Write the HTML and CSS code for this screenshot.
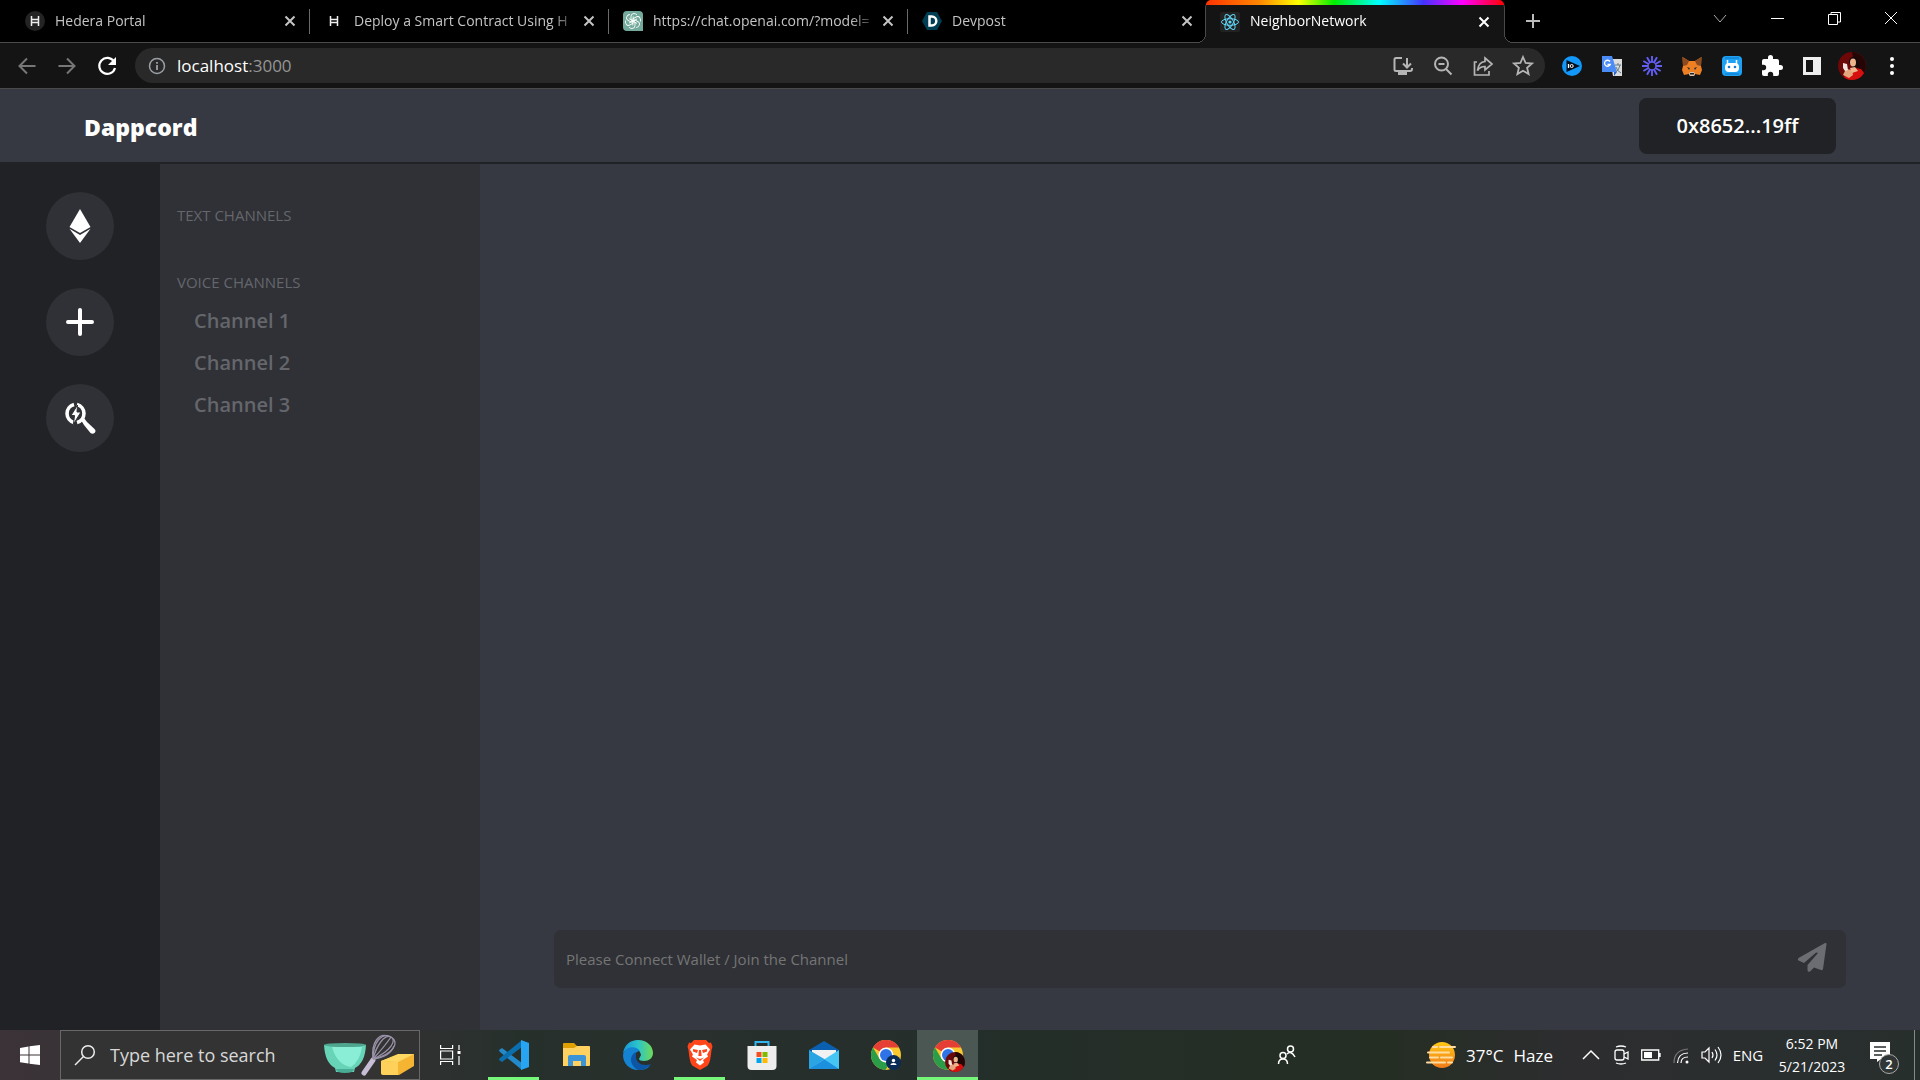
FILE: index.html
```html
<!DOCTYPE html>
<html lang="en">
<head>
  <meta charset="UTF-8" />
  <meta name="viewport" content="width=device-width, initial-scale=1.0" />
  <title>NeighborNetwork</title>
  <link rel="stylesheet" href="styles.css">
</head>
<body>
  <svg class="defs" aria-hidden="true">
    <defs>
      <symbol id="cross" viewBox="0 0 20 20"><path d="M5.5 5.5l9 9M14.500 5.500l-9 9" stroke="currentColor" stroke-width="2" fill="none"/></symbol>
      <symbol id="hedera" viewBox="0 0 20 20"><path d="M6.500 5v10M13.500 5v10M6.500 8.500h7M6.500 11.500h7" stroke="#eee" stroke-width="1.500" fill="none"/></symbol>
      <symbol id="avatar" viewBox="0 0 28 28">
        <circle cx="14" cy="14" r="14" fill="#6d0808"/>
        <path d="M14 0a14 14 0 0 1 12 21L17 14z" fill="#250606"/>
        <path d="M11 11c-1-6 7-9 9-3l1 6-5 3z" fill="#120909"/>
        <ellipse cx="15" cy="10.500" rx="3" ry="4" fill="#eeb58d"/>
        <path d="M6 25l5-7 5-2 7 1 3 4q-4 7-12 7-5 0-8-3z" fill="#d6100e"/>
        <path d="M5 23l3-6 6 1 1 5-4 3z" fill="#e5a67d"/>
        <path d="M5 11l4 1 1 6-3 1-2-3z" fill="#f4e5df"/>
        <path d="M12 16l5-1 3 4-6 2z" fill="#eeb58d"/>
      </symbol>
      <symbol id="chrome" viewBox="0 0 30 30">
        <circle cx="15" cy="15" r="15" fill="#f9c72e"/>
        <path d="M15 15L2 7.500A15 15 0 0 1 28 7.500H15z" fill="#e53e35"/>
        <path d="M2 7.500l6.500 11.300L15 22.500h4L14.500 30A15 15 0 0 1 2 7.500z" fill="#2b9c48"/>
        <circle cx="15" cy="15" r="7.500" fill="#fff"/>
        <circle cx="15" cy="15" r="6" fill="#2f73e8"/>
      </symbol>
    </defs>
  </svg>

  <!-- Browser tabs -->
  <div class="tab-strip">
    <div class="tab">
      <svg class="favicon" viewBox="0 0 20 20"><circle cx="10" cy="10" r="10" fill="#232323"/><use href="#hedera"/></svg>
      <a class="tab-title" href="#">Hedera Portal</a>
      <button class="tab-close" aria-label="Close tab"><svg><use href="#cross"/></svg></button>
    </div>
    <div class="tab">
      <svg class="favicon" viewBox="0 0 20 20"><use href="#hedera"/></svg>
      <a class="tab-title" href="#">Deploy a Smart Contract Using H</a>
      <button class="tab-close" aria-label="Close tab"><svg><use href="#cross"/></svg></button>
    </div>
    <div class="tab">
      <svg class="favicon" viewBox="0 0 20 20">
        <path d="M4 0h12a4 4 0 0 1 4 4v16H4a4 4 0 0 1-4-4V4a4 4 0 0 1 4-4z" fill="#74aa9c"/>
        <g fill="none" stroke="#fff" stroke-width=".9">
          <path id="knot" d="M8 9V5.500q0-3 3-3 2 0 3 1.500M8 9l2 1.200 4-2.300"/>
          <use href="#knot" transform="rotate(60 10 10)"/><use href="#knot" transform="rotate(120 10 10)"/>
          <use href="#knot" transform="rotate(180 10 10)"/><use href="#knot" transform="rotate(240 10 10)"/>
          <use href="#knot" transform="rotate(300 10 10)"/>
        </g>
      </svg>
      <a class="tab-title" href="#">https://chat.openai.com/?model=</a>
      <button class="tab-close" aria-label="Close tab"><svg><use href="#cross"/></svg></button>
    </div>
    <div class="tab no-divider">
      <svg class="favicon" viewBox="0 0 20 20"><path d="M5 1h10l5 9-5 9H5l-5-9z" fill="#003e54"/><path d="M7.500 5.500h2.300a4.500 4.500 0 0 1 0 9H7.500z" fill="none" stroke="#fff" stroke-width="2.500"/></svg>
      <a class="tab-title" href="#">Devpost</a>
      <button class="tab-close" aria-label="Close tab"><svg><use href="#cross"/></svg></button>
    </div>
    <div class="tab active">
      <svg class="favicon" viewBox="0 0 20 20">
        <rect width="20" height="20" rx="2" fill="#222"/>
        <g fill="none" stroke="#61dafb" stroke-width="1">
          <ellipse cx="10" cy="10" rx="8.500" ry="3.300"/>
          <ellipse cx="10" cy="10" rx="8.500" ry="3.300" transform="rotate(60 10 10)"/>
          <ellipse cx="10" cy="10" rx="8.500" ry="3.300" transform="rotate(120 10 10)"/>
        </g>
        <circle cx="10" cy="10" r="1.600" fill="#61dafb"/>
      </svg>
      <a class="tab-title" href="#">NeighborNetwork</a>
      <button class="tab-close" aria-label="Close tab"><svg><use href="#cross"/></svg></button>
    </div>
    <button class="new-tab" aria-label="New tab"><svg viewBox="0 0 20 20"><path d="M10 3v14M3 10h14" stroke="#bbb" stroke-width="2"/></svg></button>
    <div class="window-controls">
      <button aria-label="Search tabs"><svg viewBox="0 0 20 20"><path d="M4 7l6 7 6-7" stroke="#aaa" fill="none"/></svg></button>
      <button aria-label="Minimize"><svg viewBox="0 0 20 20"><path d="M4 10.500h13" stroke="#fff" fill="none"/></svg></button>
      <button aria-label="Restore"><svg viewBox="0 0 20 20"><path d="M4.500 6.500h9v10h-9zM7 6V4.500h9.500V14H14" stroke="#fff" fill="none"/></svg></button>
      <button aria-label="Close"><svg viewBox="0 0 20 20"><path d="M4 4l12 12M16 4L4 16" stroke="#fff" fill="none"/></svg></button>
    </div>
  </div>

  <!-- Address bar -->
  <div class="toolbar">
    <button aria-label="Back"><svg viewBox="0 0 24 24"><path d="M20.500 12H5M12 4.500L4.500 12l7.500 7.500" stroke="#777" stroke-width="2" fill="none"/></svg></button>
    <button aria-label="Forward"><svg viewBox="0 0 24 24"><path d="M3.500 12H19M12 4.500l7.500 7.500-7.500 7.500" stroke="#777" stroke-width="2" fill="none"/></svg></button>
    <button aria-label="Reload"><svg viewBox="0 0 24 24"><path d="M19 7.500A8 8 0 1 0 20 14" stroke="#fff" stroke-width="2.200" fill="none"/><path d="M21 3v8h-8z" fill="#fff"/></svg></button>
    <div class="omnibox">
      <svg class="info" viewBox="0 0 20 20"><circle cx="10" cy="10" r="7.500" fill="none" stroke="#9aa0a6" stroke-width="1.500"/><path d="M10 9v5M10 6v1.700" stroke="#9aa0a6" stroke-width="1.800"/></svg>
      <a class="url" href="#">localhost<span>:3000</span></a>
      <button aria-label="Install app"><svg viewBox="0 0 24 24" fill="none" stroke="#b5b5b5" stroke-width="2"><path d="M11 4H5q-1.500 0-1.500 1.500v10Q3.500 17 5 17h14q2 0 2-2v-1M16 4v9M12 9.500l4 4 4-4"/><path d="M7 18h9v3H7z" fill="#b5b5b5" stroke="none"/></svg></button>
      <button aria-label="Zoom"><svg viewBox="0 0 24 24" fill="none" stroke="#b5b5b5" stroke-width="2"><circle cx="10.500" cy="10" r="6.500"/><path d="M15 15l5.500 5.500M7.500 10h6"/></svg></button>
      <button aria-label="Share"><svg viewBox="0 0 24 24" fill="none" stroke="#b5b5b5" stroke-width="1.700"><path d="M6 8H3.500v13H18v-4"/><path d="M14 4l7 6-7 6v-3.500q-5 0-7.500 4Q7.500 8 14 7.500z"/></svg></button>
      <button aria-label="Bookmark"><svg viewBox="0 0 24 24" fill="none" stroke="#b5b5b5" stroke-width="1.800"><path d="M12 3l2.600 6 6.400.5-4.900 4.300 1.500 6.300L12 16.700l-5.600 3.400 1.500-6.300L3 9.500 9.400 9z"/></svg></button>
    </div>
    <button aria-label="IQ extension"><svg viewBox="0 0 24 24"><circle cx="12" cy="12" r="10" fill="#1298fa"/><path d="M6.500 6L20 12 6.500 18z" fill="#05101c"/><path d="M8.500 10v4" stroke="#fff" stroke-width="1.300"/><circle cx="11.700" cy="12" r="1.500" stroke="#fff" fill="none"/></svg></button>
    <button aria-label="Translate"><svg viewBox="0 0 24 24"><path d="M10 5h12v17H13z" fill="#dcdcdc"/><path d="M2 2h10l5 16H2z" fill="#4b8bf5"/><path d="M14 18h3l-3 4z" fill="#2865c6"/><path d="M10 7.500a3 3 0 1 0 .3 3H7.500" stroke="#fff" stroke-width="1.300" fill="none"/><path d="M15 11h6M18 9v2M20 11q-1 5-4 7M16 13q1 4 5 6" stroke="#607d8b" fill="none"/></svg></button>
    <button aria-label="Loom"><svg viewBox="0 0 24 24" fill="none" stroke="#625df5" stroke-width="1.900"><path id="ray" d="M12 2v6M12 16v6"/><use href="#ray" transform="rotate(30 12 12)"/><use href="#ray" transform="rotate(60 12 12)"/><use href="#ray" transform="rotate(90 12 12)"/><use href="#ray" transform="rotate(120 12 12)"/><use href="#ray" transform="rotate(150 12 12)"/><circle cx="12" cy="12" r="4" stroke-width="1.500"/></svg></button>
    <button aria-label="MetaMask"><svg viewBox="0 0 24 24"><path d="M2.500 3L9 7h6l6.500-4L21 12l1 4-2 5-5-1-1 2h-4l-1-2-5 1-2-5 1-4z" fill="#ee7f23"/><path d="M2.500 3L9 7l-2 4-4 1zM21.500 3L15 7l2 4 4 1z" fill="#8b4a20"/><path d="M9 20l1-2h4l1 2-1 2h-4z" fill="#d8c3b3"/><path d="M7 13l3 1-1 2zM17 13l-3 1 1 2z" fill="#27313d"/><path d="M10 19h4v1.500h-4z" fill="#222"/></svg></button>
    <button aria-label="Robot extension"><svg viewBox="0 0 24 24"><rect x="2" y="2" width="20" height="20" rx="4" fill="#1da1f5"/><path d="M5 4h14M5 20h14" stroke="#1274bd"/><path d="M7.500 6v4M16.500 6v4" stroke="#fff" stroke-width="1.500"/><rect x="5" y="9" width="14" height="9" rx="4" fill="#fff"/><circle cx="9" cy="13" r="1.300" fill="#147bc7"/><circle cx="15" cy="13" r="1.300" fill="#147bc7"/></svg></button>
    <button aria-label="Extensions"><svg viewBox="0 0 24 24"><path d="M20.500 11H19V7a2 2 0 0 0-2-2h-4V3.500a2.500 2.500 0 0 0-5 0V5H4a2 2 0 0 0-2 2v3.800h1.500a2.700 2.700 0 0 1 0 5.400H2V20a2 2 0 0 0 2 2h3.800v-1.500a2.700 2.700 0 0 1 5.400 0V22H17a2 2 0 0 0 2-2v-4h1.500a2.500 2.500 0 0 0 0-5z" fill="#fff"/></svg></button>
    <button aria-label="Side panel"><svg viewBox="0 0 24 24"><path d="M3 3h18v18H3zM6 6v12h7V6z" fill="#eee" fill-rule="evenodd"/></svg></button>
    <button aria-label="Profile"><svg class="profile"><use href="#avatar"/></svg></button>
    <button aria-label="Menu"><svg viewBox="0 0 24 24" fill="#fff"><circle cx="12" cy="5" r="2"/><circle cx="12" cy="12" r="2"/><circle cx="12" cy="19" r="2"/></svg></button>
  </div>

  <!-- App -->
  <nav class="app-nav">
    <h1>Dappcord</h1>
    <button class="account">0x8652...19ff</button>
  </nav>
  <main>
    <div class="servers">
      <button class="server" aria-label="Ethereum"><svg viewBox="0 0 36 36" fill="#fff"><path d="M18 1l10.500 18L18 25 7.500 19z"/><path d="M7.500 20.700L18 27l10.500-6.300L18 35z"/></svg></button>
      <button class="server" aria-label="Add server"><svg viewBox="0 0 36 36"><path d="M18 6v24M6 18h24" stroke="#fff" stroke-width="4" stroke-linecap="round"/></svg></button>
      <button class="server" aria-label="Search servers"><svg viewBox="0 0 36 36"><path d="M12 4.500a9.300 9.300 0 0 0 0 18M15 4.500a9.300 9.300 0 0 1 0 18" stroke="#fff" stroke-width="3.600" fill="none"/><path d="M15.500 5L9 15.500h3.500L11.500 24 19 12h-4z" fill="#fff" stroke="#2f3136" stroke-width="1"/><path d="M19 20l3-2 3 4 7.500 7q2 2 0 4-2 1.500-4 0L22 25z" fill="#fff"/></svg></button>
    </div>
    <aside class="channels">
      <section>
        <h2>TEXT CHANNELS</h2>
      </section>
      <section>
        <h2>VOICE CHANNELS</h2>
        <ul>
          <li><a href="#">Channel 1</a></li>
          <li><a href="#">Channel 2</a></li>
          <li><a href="#">Channel 3</a></li>
        </ul>
      </section>
    </aside>
    <div class="messages">
      <form class="message-form">
        <input type="text" aria-label="Message" placeholder="Please Connect Wallet / Join the Channel" disabled>
        <button type="submit" aria-label="Send"><svg viewBox="0 0 30 30"><path d="M28 1q1.500-.5 1.500 1L26 27q-.5 1.500-2 1l-7-2.500-4 4q-2.500 1-2.500-1.500v-5L21 11q-1.500-1-2.500 0L7 21l-5.500-2.500Q0 17.500 1.500 16z" fill="#6c6d73"/></svg></button>
      </form>
    </div>
  </main>

  <!-- Windows taskbar -->
  <footer class="taskbar">
    <button class="start" aria-label="Start"><svg viewBox="0 0 20 20" fill="#fff"><path d="M0 3l8.500-1.500v8H0zM9.500 1.300L20 0v9.500H9.500zM0 10.500h8.500v8L0 17.300zM9.500 10.500H20V20L9.500 18.700z"/></svg></button>
    <div class="search">
      <svg class="lens" viewBox="0 0 20 20" fill="none" stroke="#eee" stroke-width="1.500"><circle cx="13" cy="7" r="6.300"/><path d="M8.500 11.500L0 20"/></svg>
      <input type="text" aria-label="Search" placeholder="Type here to search">
      <svg class="baking" viewBox="0 0 92 42">
        <path d="M1 11h42q-1 18-11 23l-1 4H13l-1-4Q2 29 1 11z" fill="#67d3b7"/>
        <path d="M9 13h30q-2 14-11 20-14-2-19-20z" fill="#89eed5"/>
        <path d="M13 35h18q0 4-9 4t-9-4z" fill="#48ad94"/>
        <ellipse cx="22" cy="11" rx="21" ry="2" fill="#4fa68f"/>
        <path d="M41 39l9-13" stroke="#c6bdd6" stroke-width="5" stroke-linecap="round"/>
        <g fill="none" stroke="#9a92a8" stroke-width="1.300"><path d="M50 25C50 8 59-2 68 3s3 17-18 22"/><path d="M50 25C54 10 62 0 68 3s0 14-18 22"/><path d="M50 25C48 8 56-1 65 2"/><path d="M50 25Q62 12 68 3M50 25q17-2 21-13"/></g>
        <path d="M58 27l17-6 16-1v12L76 41l-18-1z" fill="#f5b532"/>
        <path d="M58 27l17-7 16 0-16 8z" fill="#ffd863"/>
        <path d="M58 27l17 1v13H60q-2 0-2-2z" fill="#ffd05a"/>
      </svg>
    </div>
    <button class="task-view" aria-label="Task view"><svg viewBox="0 0 20 20" fill="none" stroke="#fff" stroke-width="1.200"><path d="M.600 0v3.500h12V0M.600 20v-3.500h12V20M.600 6h12v8H.600zM19 0v5M19 11v9"/><path d="M17.500 6h3v3h-3z" fill="#fff" stroke="none"/></svg></button>
    <div class="apps">
      <button class="app running" aria-label="Visual Studio Code"><svg viewBox="0 0 30 30"><path d="M0 10l3-2 20 15v7L1 12q-1-1-1-2z" fill="#2489ca"/><path d="M0 20l3 2L23 7V0L1 18q-1 1-1 2z" fill="#0b6fae"/><path d="M22 0l8 3v24l-8 3z" fill="#27a5f2"/></svg></button>
      <button class="app" aria-label="File Explorer"><svg viewBox="0 0 30 30"><path d="M2 4q0-1 1-1h10l3 3v5H2z" fill="#dfa000"/><path d="M2 8h11l3-2h12q1 0 1 1v18q0 1-1 1H2z" fill="#ffd160"/><path d="M7 26V17q0-2 2-2h14q2 0 2 2v9h-5v-5h-8v5z" fill="#3c94d8"/></svg></button>
      <button class="app" aria-label="Edge"><svg viewBox="0 0 30 30"><defs><linearGradient id="edge" x1="0" x2="1"><stop stop-color="#1895d8"/><stop offset=".5" stop-color="#2bc4cb"/><stop offset="1" stop-color="#70db57"/></linearGradient></defs><path d="M0 14C1 5 7 0 15 0c9 0 15 6 15 13 0 5-4 8-9 8-3 0-5-1-5-2l2-4c-2-9-14-9-18-1z" fill="url(#edge)"/><path d="M0 15c2-9 13-10 17-4-5 0-8 7-4 12 4 6 10 5 14 3-3 3-7 4-12 4C6 30 0 23 0 15z" fill="#1483d2"/><path d="M13 12c-7 3-7 13 2 18 6 0 10-2 13-6-8 3-15-1-15-7z" fill="#0d56a6"/></svg></button>
      <button class="app running" aria-label="Brave"><svg viewBox="0 0 30 30"><path d="M9 0h12l3 3 2-.5 1.500 4L26.500 10c-1 10-2 14-4.500 16l-7 4-7-4c-2.500-2-3.500-6-4.500-16L2.500 6.500l1.500-4 2 .5z" fill="#ff461a"/><path d="M9.500 4.500l5.500 1 5.500-1 4.500 5-3 5 1 2-5 3.500 1 2.500-4 3-4-3 1-2.500-5-3.500 1-2-3-5z" fill="#fff"/><path d="M8 9l5 1-1 3-4-1.500zM22 9l-5 1 1 3 4-1.500zM11 17.500l4 1.500 4-1.500-4 3.500zM14 10h2l.7 6h-3.400z" fill="#ff461a"/></svg></button>
      <button class="app" aria-label="Microsoft Store"><svg viewBox="0 0 30 30"><path d="M8.500 7V2h13v5" fill="none" stroke="#32b4ee" stroke-width="2"/><path d="M.500 6h29v20q0 4-4 4h-21q-4 0-4-4z" fill="#eee"/><path d="M9.500 12h5v5h-5z" fill="#f25022"/><path d="M15.500 12h5v5h-5z" fill="#7fba00"/><path d="M9.500 18h5v5h-5z" fill="#00a4ef"/><path d="M15.500 18h5v5h-5z" fill="#ffb900"/></svg></button>
      <button class="app" aria-label="Mail"><svg viewBox="0 0 30 30"><path d="M0 10l15-9 15 9v6H0z" fill="#0a5fb0"/><path d="M3 10h24v6l-12 5L3 16z" fill="#f2f2f2"/><path d="M0 10l17 10-17 9z" fill="#2ba4e4"/><path d="M30 10v19H0z" fill="#46c6f5"/><path d="M15.500 19.500L30 29H0z" fill="#1c90dc"/></svg></button>
      <button class="app" aria-label="Chrome"><svg viewBox="0 0 30 30"><use href="#chrome"/><circle cx="22.500" cy="22.500" r="7.500" fill="#0b2b57"/><circle cx="22.500" cy="20.500" r="1.700" fill="#fff"/><path d="M19.500 25q0-2 3-2t3 2z" fill="#fff"/></svg></button>
      <button class="app running current" aria-label="Chrome, NeighborNetwork"><svg viewBox="0 0 30 30"><use href="#chrome"/><use href="#avatar" x="12" y="12" width="20" height="20"/></svg></button>
    </div>
    <div class="tray">
      <button class="people" aria-label="People"><svg viewBox="0 0 20 20" fill="none" stroke="#fff" stroke-width="1.500"><circle cx="13.500" cy="4" r="3"/><circle cx="6" cy="10.500" r="3"/><path d="M1.500 19q0-5 4.500-5t4.500 5M10 9q4-4 8 3"/></svg></button>
      <button class="weather">
        <svg viewBox="0 0 30 26"><defs><linearGradient id="sun" x2="0" y2="1"><stop stop-color="#ffc916"/><stop offset="1" stop-color="#f07a1a"/></linearGradient></defs><circle cx="16" cy="13" r="13" fill="url(#sun)"/><path d="M7 5h4M14 5h15M2 10.500h21M4 15.500h8M15 15.500h11M1 20.500h18M22 20.500h4" stroke="#ffdca0" stroke-width="2" stroke-linecap="round"/></svg>
        <span>37°C</span><span>Haze</span>
      </button>
      <div class="tray-icons">
        <button aria-label="Show hidden icons"><svg viewBox="0 0 20 20"><path d="M2 14l8-8 8 8" stroke="#fff" stroke-width="1.500" fill="none"/></svg></button>
        <button aria-label="Meet Now"><svg viewBox="0 0 20 20" fill="none" stroke="#fff" stroke-width="1.300"><rect x="4" y="5" width="9" height="10" rx="2"/><path d="M13 9l4-2v7l-4-2M5 2q5-2 10 0M5 18q5 2 10 0"/></svg></button>
        <button aria-label="Battery"><svg viewBox="0 0 20 20"><path d="M.700 5h17v10h-17zM19 8v4" fill="none" stroke="#fff" stroke-width="1.300"/><path d="M3 7h8v6H3z" fill="#fff"/></svg></button>
        <button aria-label="Network"><svg viewBox="0 0 20 20" fill="none" stroke="#fff" stroke-width="1.200"><path d="M3 18Q3 5 17 4" stroke="#777"/><path d="M6.500 18Q7 8 17 8M10 18q0-6 7-6"/><circle cx="16" cy="17" r="1.500" fill="#fff" stroke="none"/></svg></button>
        <button aria-label="Volume"><svg viewBox="0 0 20 20" fill="none" stroke="#fff" stroke-width="1.200"><path d="M1 7h3l4-4v14l-4-4H1zM11 7q2 3 0 6M14 4.500q4 5.500 0 11M17 2q6 8 0 16"/></svg></button>
      </div>
      <button class="lang">ENG</button>
      <button class="clock"><span>6:52 PM</span><span>5/21/2023</span></button>
      <button class="notifications" aria-label="Notifications">
        <svg viewBox="0 0 20 20"><path d="M0 0h20v17h-9l-4 3v-3H0z" fill="#fff"/><path d="M4 5h12M4 9h12M4 13h8" stroke="#272d2d" stroke-width="1.300"/></svg>
        <span class="badge">2</span>
      </button>
      <button class="show-desktop" aria-label="Show desktop"></button>
    </div>
  </footer>
</body>
</html>
```

FILE: styles.css
```css
* {
  box-sizing: border-box;
}
body {
  margin: 0;
  min-height: 100vh;
  display: flex;
  flex-direction: column;
  background: #363941;
  font-family: "Open Sans", "Noto Sans", sans-serif;
  color: #fff;
}
button {
  display: flex;
  align-items: center;
  justify-content: center;
  padding: 0;
  border: none;
  background: none;
  color: inherit;
  font: inherit;
  cursor: pointer;
}
a {
  color: inherit;
  text-decoration: none;
}
svg {
  flex-shrink: 0;
  overflow: visible;
}
.defs {
  position: absolute;
  width: 0;
  height: 0;
}

/* Tabs */
.tab-strip {
  display: flex;
  align-items: center;
  height: 43px;
  padding-left: 11px;
  background: #000;
  border-bottom: 1px solid #4a4a4a;
}
.tab {
  position: relative;
  display: flex;
  align-items: center;
  width: 299px;
  height: 42px;
  padding: 0 10px 0 14px;
  color: #c4c4c4;
  font-size: 14px;
}
.tab::after {
  content: "";
  position: absolute;
  right: 0;
  top: 9px;
  width: 1px;
  height: 25px;
  background: #6a6a6a;
}
.tab.no-divider::after {
  display: none;
}
.favicon {
  width: 20px;
  height: 20px;
  margin-right: 10px;
}
.tab-title {
  flex: 1;
  padding-bottom: 2px;
  overflow: hidden;
  white-space: nowrap;
  -webkit-mask-image: linear-gradient(to right, #000 88%, transparent);
  mask-image: linear-gradient(to right, #000 88%, transparent);
}
.tab-close svg {
  width: 20px;
  height: 20px;
}
.tab.active {
  align-self: flex-start;
  width: 300px;
  height: 43px;
  margin-left: -2px;
  background: #141414;
  border: 1px solid #4a4a4a;
  border-top: none;
  border-bottom: none;
  border-radius: 8px 8px 0 0;
  color: #fff;
}
.tab.active::before {
  content: "";
  position: absolute;
  left: 0;
  right: 0;
  top: 0;
  height: 5px;
  border-radius: 8px 8px 0 0;
  background: linear-gradient(to right, #f30, #f80 18%, #ff0 31%, #0e0 43%, #0ff 58%, #43f 73%, #f0f 86%, #f00);
}
/* curved feet where the active tab meets the toolbar */
.tab.active::after {
  top: auto;
  bottom: 0;
  left: -9px;
  right: -9px;
  width: auto;
  height: 9px;
  background:
    radial-gradient(circle at 0 0, #000 8px, #4a4a4a 8px 9px, #141414 9px) left / 9px 9px no-repeat,
    radial-gradient(circle at 100% 0, #000 8px, #4a4a4a 8px 9px, #141414 9px) right / 9px 9px no-repeat;
}
.new-tab {
  width: 40px;
  height: 40px;
  margin-left: 8px;
}
.new-tab svg {
  width: 20px;
  height: 20px;
}
.window-controls {
  display: flex;
  margin-left: auto;
  padding-right: 1px;
}
.window-controls button {
  width: 57px;
  height: 36px;
  margin-bottom: 6px;
}
.window-controls svg {
  width: 20px;
  height: 20px;
}

/* Address bar */
.toolbar {
  display: flex;
  align-items: center;
  height: 46px;
  padding: 0 8px 0 7px;
  background: #141414;
  border-bottom: 1px solid #4a4a4a;
}
.toolbar button {
  width: 40px;
  height: 36px;
}
.toolbar svg {
  width: 24px;
  height: 24px;
}
.toolbar .profile {
  width: 28px;
  height: 28px;
}
.omnibox {
  flex: 1;
  display: flex;
  align-items: center;
  height: 35px;
  margin: 0 7px 0 8px;
  padding: 0 2px 0 12px;
  background: #292929;
  border-radius: 18px;
}
.toolbar .info {
  width: 20px;
  height: 20px;
  margin-right: 10px;
}
.url {
  flex: 1;
  font-size: 17px;
}
.url span {
  color: #959595;
}

/* App header */
.app-nav {
  display: flex;
  align-items: center;
  justify-content: space-between;
  height: 75px;
  padding: 0 84px;
  border-bottom: 2px solid #202225;
}
.app-nav h1 {
  margin: 2px 0 0;
  font-size: 23px;
  font-weight: 800;
}
.account {
  width: 197px;
  height: 56px;
  background: #202225;
  border-radius: 8px;
  font-size: 20px;
  font-weight: 600;
}

/* App body */
main {
  flex: 1;
  display: flex;
}
.servers {
  display: flex;
  flex-direction: column;
  align-items: center;
  gap: 28px;
  width: 160px;
  padding-top: 28px;
  background: #202225;
}
.server {
  width: 68px;
  height: 68px;
  background: #2f3136;
  border-radius: 50%;
}
.server svg {
  width: 36px;
  height: 36px;
}
.channels {
  width: 320px;
  padding: 39px 17px;
  background: #2f3136;
  color: #65666c;
}
.channels section {
  margin-bottom: 43px;
}
.channels h2 {
  margin: 0;
  font-size: 15px;
  font-weight: 400;
  line-height: 24px;
}
.channels ul {
  margin: 6px 0 0;
  padding: 0 0 0 17px;
  list-style: none;
}
.channels li {
  font-size: 20px;
  font-weight: 600;
  line-height: 42px;
}
.messages {
  flex: 1;
  display: flex;
  flex-direction: column;
  justify-content: flex-end;
  padding: 0 74px 42px;
}
.message-form {
  display: flex;
  align-items: center;
  height: 58px;
  padding: 0 19px 0 12px;
  background: #2f3136;
  border-radius: 7px;
}
.message-form input {
  flex: 1;
  padding: 0;
  border: none;
  outline: none;
  background: none;
  color: #fff;
  font: 15px "Open Sans", "Noto Sans", sans-serif;
}
.message-form input::placeholder {
  color: #757575;
}
.message-form button {
  width: 30px;
  height: 30px;
  margin-bottom: 4px;
}
.message-form svg {
  width: 30px;
  height: 30px;
}

/* Taskbar */
.taskbar {
  display: flex;
  height: 50px;
  background: linear-gradient(to right, #3b3337, #332f33 12%, #2f3131 22%, #26302b 27%, #29302d 35%, #242e2a 50%, #252e23 72%, #2d2d30 82%, #272f2d);
}
.start,
.task-view {
  width: 60px;
}
.start svg,
.task-view svg {
  width: 20px;
  height: 20px;
}
.search {
  display: flex;
  align-items: center;
  width: 360px;
  padding: 0 4px 0 14px;
  background: #333;
  border: 1px solid #686868;
}
.search .lens {
  width: 20px;
  height: 20px;
}
.search input {
  flex: 1;
  min-width: 0;
  padding: 0 0 0 15px;
  border: none;
  outline: none;
  background: none;
  color: #fff;
  font: 18px "Open Sans", "Noto Sans", sans-serif;
}
.search input::placeholder {
  color: #d8d8d8;
}
.baking {
  width: 92px;
  height: 42px;
}
.apps {
  display: flex;
  gap: 11px;
  margin-left: 8px;
}
.app {
  width: 51px;
  border-top: 3px solid transparent;
  border-bottom: 3px solid transparent;
}
.app svg {
  width: 30px;
  height: 30px;
}
.app.running {
  border-bottom-color: #76f77a;
}
.app.current {
  width: 61px;
  margin-left: -5px;
  border-top: none;
  padding-top: 3px;
  background: #4b5753;
}
.tray {
  display: flex;
  align-items: stretch;
  margin-left: auto;
}
.people {
  width: 50px;
  margin-right: 114px;
}
.people svg {
  width: 20px;
  height: 20px;
}
.weather {
  gap: 10px;
  margin-right: 28px;
  font-size: 17px;
}
.weather svg {
  width: 30px;
  height: 26px;
}
.tray-icons {
  display: flex;
  gap: 10px;
  margin-right: 2px;
}
.tray-icons svg {
  width: 20px;
  height: 20px;
}
.lang {
  width: 50px;
  font-size: 15px;
}
.clock {
  flex-direction: column;
  width: 88px;
  margin-left: -5px;
  font-size: 14px;
  line-height: 23px;
}
.notifications {
  position: relative;
  width: 58px;
}
.notifications svg {
  width: 20px;
  height: 20px;
  margin-right: 10px;
  margin-bottom: 6px;
}
.badge {
  position: absolute;
  left: 23px;
  top: 24px;
  width: 20px;
  height: 20px;
  background: #303635;
  border: 1px solid #aaa;
  border-radius: 50%;
  font-size: 13px;
  font-weight: 600;
  line-height: 18px;
  text-align: center;
}
.show-desktop {
  width: 6px;
  border-left: 1px solid #888;
}
```
